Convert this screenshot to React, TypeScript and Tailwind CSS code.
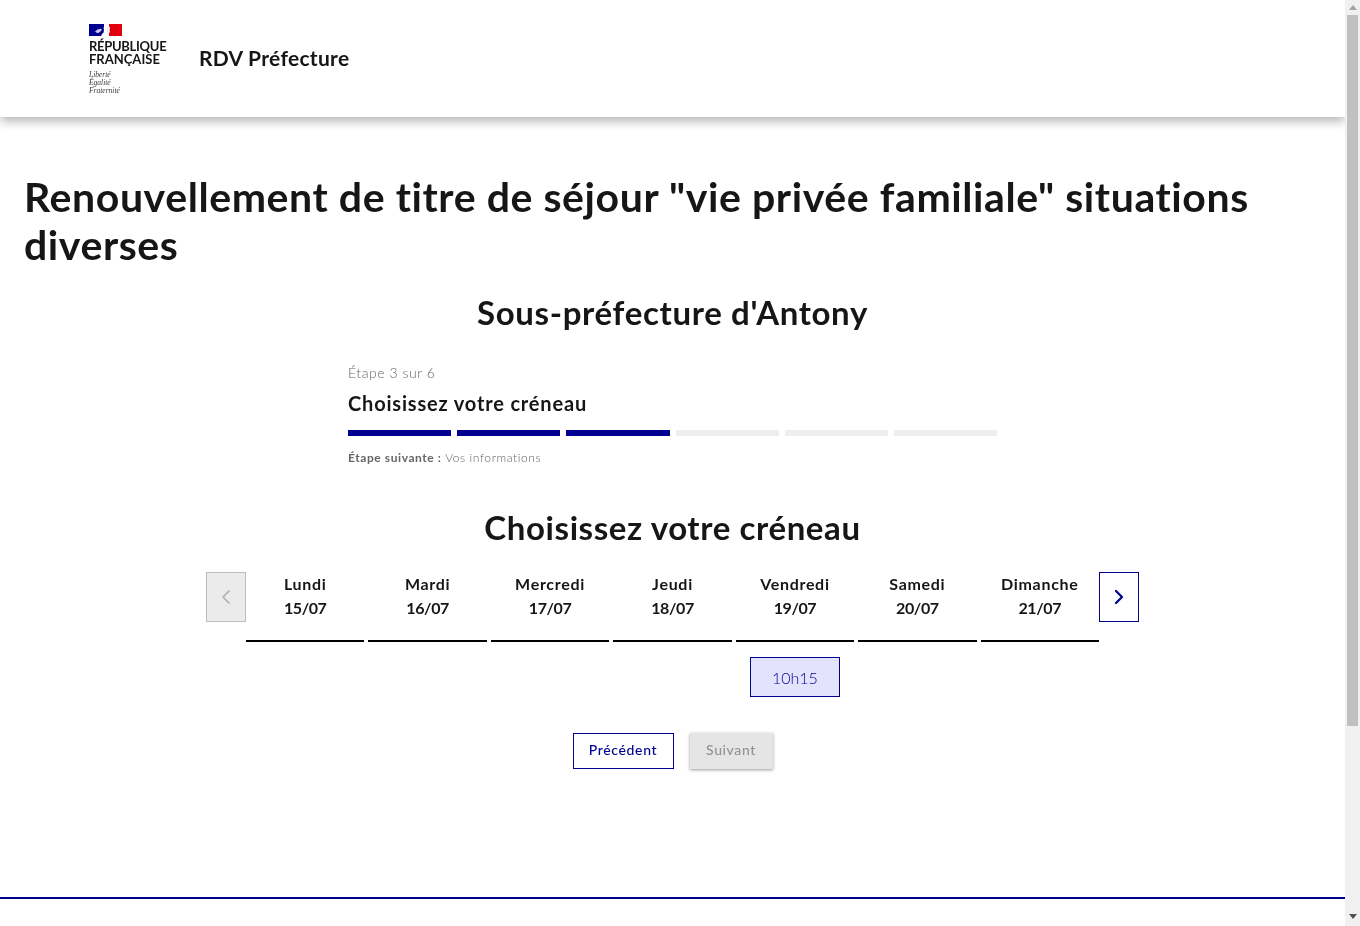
import { ChevronLeft, ChevronRight } from "lucide-react";

const days = [
  { name: "Lundi", date: "15/07" },
  { name: "Mardi", date: "16/07" },
  { name: "Mercredi", date: "17/07" },
  { name: "Jeudi", date: "18/07" },
  { name: "Vendredi", date: "19/07", slot: "10h15" },
  { name: "Samedi", date: "20/07" },
  { name: "Dimanche", date: "21/07" },
];

const steps = [true, true, true, false, false, false];

function Flag() {
  return (
    <svg width="33" height="12" viewBox="0 0 33 12" aria-hidden>
      <rect width="33" height="12" fill="#fff" />
      <rect width="15" height="12" fill="#000091" />
      <rect x="20" width="13" height="12" fill="#e1000f" />
      {/* profil de Marianne */}
      <path d="M15 0v2.500l-.500 2 1 1-1 1.500 .500 1-2 2-1 2h3.500z" fill="#fff" />
      <path d="M6 7.500l2.500-2 3.500-.800 1 .800-1.500 2-2 1.500-2-.300z" fill="#c9c9e8" />
      <path d="M20 0v2l1 2-.500 2 .500 2-1 1v3z" fill="#fff" />
      <path d="M18.500 3l-.500 3 .500 2.500" stroke="#d9d9d9" strokeWidth="0.700" fill="none" />
    </svg>
  );
}

function Logo() {
  return (
    <div className="flex w-[78px] flex-col">
      <Flag />
      <p className="mt-[4px] text-[13px] leading-[13px] font-bold text-[#161616]">
        <span className="tracking-[-0.3px]">RÉPUBLIQUE</span>
        <br />
        FRANÇAISE
      </p>
      <p className="mt-[5px] font-['Liberation_Serif',serif] text-[7.500px] leading-[8px] text-[#3a3a3a] italic">
        Liberté
        <br />
        Égalité
        <br />
        Fraternité
      </p>
    </div>
  );
}

function Stepper() {
  return (
    <div className="mx-auto mt-[29px] w-[649px]">
      <p className="text-[14px] leading-[24px] font-light tracking-[0.55px] text-[#666]">Étape 3 sur 6</p>
      <h3 className="mt-[4px] text-[20px] leading-[28px] font-bold tracking-[0.82px] text-[#161616]">
        Choisissez votre créneau
      </h3>
      <div className="mt-[13px] flex gap-[6px]">
        {steps.map((done, i) => (
          <div key={i} className={done ? "h-[6px] flex-1 bg-[#000091]" : "h-[6px] flex-1 bg-[#eeeeee]"} />
        ))}
      </div>
      <p className="mt-[12px] text-[12px] leading-[20px] tracking-[0.58px] text-[#666]">
        <span className="font-bold">Étape suivante :</span> <span className="font-light">Vos informations</span>
      </p>
    </div>
  );
}

function SlotPicker() {
  return (
    <div className="mx-auto mt-[25px] flex w-[933px] items-start">
      <button className="flex h-[50px] w-[40px] items-center justify-center border border-[#bdbdbd] bg-[#ebebeb] text-[#b0b0b0]">
        <ChevronLeft size={24} strokeWidth={1.75} />
      </button>
      <div className="grid w-[853px] grid-cols-7 gap-x-[4px]">
        {days.map((day) => (
          <div key={day.date} className="flex flex-col items-center">
            <div className="w-full border-b-2 border-black pb-[20px] text-center text-[16px] leading-[24px] font-bold text-[#161616]">
              <p className="tracking-[0.7px]">{day.name}</p>
              <p className="tracking-[-0.4px]">{day.date}</p>
            </div>
            {day.slot && (
              <button className="mt-[15px] h-[40px] w-[90px] border border-[#000091] bg-[#e3e3fd] pt-[2px] text-[16px] font-light text-[#000091]">
                {day.slot}
              </button>
            )}
          </div>
        ))}
      </div>
      <button className="flex h-[50px] w-[40px] items-center justify-center border border-[#000091] bg-white text-[#000091]">
        <ChevronRight size={24} strokeWidth={2.25} />
      </button>
    </div>
  );
}

function Scrollbar() {
  return (
    <div className="flex h-[926px] w-[15px] shrink-0 flex-col items-center bg-[#f1f1f1]">
      <svg className="mt-[5px] shrink-0" width="8" height="5" viewBox="0 0 8 5" aria-hidden>
        <path d="M4 0l4 5H0z" fill="#a3a3a3" />
      </svg>
      <div className="mt-[5px] h-[711px] w-[11px] bg-[#c1c1c1]" />
      <svg className="mt-[188px] shrink-0" width="8" height="5" viewBox="0 0 8 5" aria-hidden>
        <path d="M0 0h8L4 5z" fill="#505050" />
      </svg>
    </div>
  );
}

export default function App() {
  return (
    <div className="flex h-[926px] w-[1360px] overflow-hidden font-['Lato',sans-serif] text-[#161616] will-change-transform">
      <div className="flex w-[1345px] shrink-0 flex-col">
        <header className="flex h-[117px] shrink-0 items-start gap-[32px] pt-[24px] pl-[89px] shadow-[0_4px_10px_rgba(0,0,0,0.3)]">
          <Logo />
          <p className="mt-[19px] text-[21px] leading-[30px] font-bold tracking-[0.3px]">RDV Préfecture</p>
        </header>

        <main className="flex-1">
          <h1 className="mt-[56px] pl-[24px] text-[41px] leading-[48px] font-bold tracking-[0.58px]">
            Renouvellement de titre de séjour "vie privée familiale" situations diverses
          </h1>
          <h2 className="mt-[23px] text-center text-[33px] leading-[40px] font-bold tracking-[0.65px]">
            Sous-préfecture d'Antony
          </h2>
          <Stepper />
          <h2 className="mt-[39px] text-center text-[33px] leading-[40px] font-bold tracking-[0.6px]">
            Choisissez votre créneau
          </h2>
          <SlotPicker />
          <div className="mt-[36px] flex justify-center gap-[16px]">
            <button className="h-[36px] w-[101px] border border-[#000091] pb-[4px] text-[14px] font-medium tracking-[0.65px] text-[#000091]">
              Précédent
            </button>
            <button className="h-[36px] w-[83px] bg-[#e5e5e5] pb-[4px] text-[14px] font-medium tracking-[0.6px] text-[#929292] shadow-[0_1px_3px_rgba(0,0,0,0.4)]">
              Suivant
            </button>
          </div>
        </main>

        <footer className="mb-[27px] h-[2px] shrink-0 bg-[#000091]" />
      </div>
      <Scrollbar />
    </div>
  );
}
